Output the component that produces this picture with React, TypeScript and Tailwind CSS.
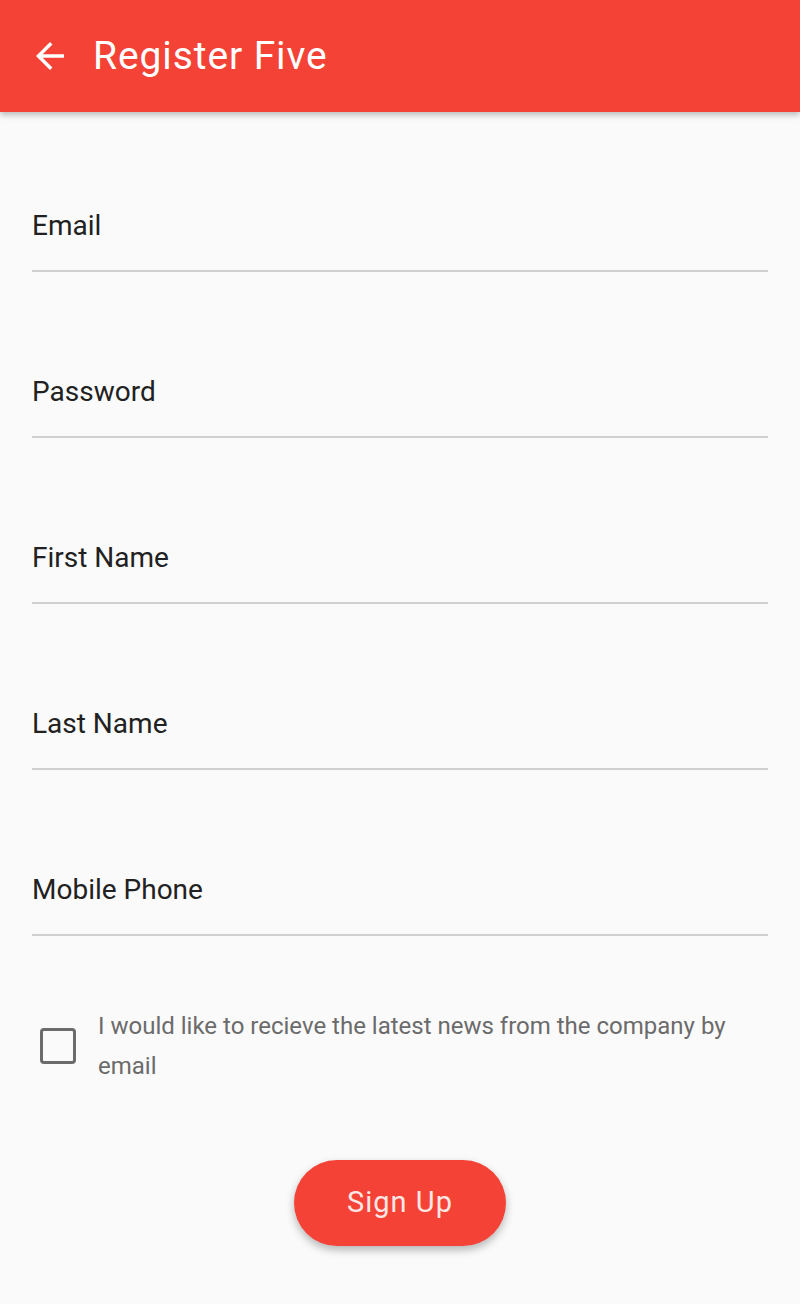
import { useState } from 'react'

const fields = ['Email', 'Password', 'First Name', 'Last Name', 'Mobile Phone']

export default function App() {
  const [checked, setChecked] = useState(false)

  return (
    <div className="min-h-[1304px] bg-[#fafafa] font-['Roboto','Liberation_Sans',sans-serif]">
      {/* app bar */}
      <div className="h-[112px] bg-[#f44336] flex items-center shadow-[0_3px_6px_rgba(0,0,0,0.25)] relative z-10">
        <div className="w-[42px] h-[42px] ml-[29px] text-white">
          <svg viewBox="0 0 24 24" width="42" height="42" fill="currentColor">
            <path d="M20 11H7.83l5.59-5.59L12 4l-8 8 8 8 1.41-1.41L7.83 13H20v-2z" />
          </svg>
        </div>
        <h1 className="ml-[22px] text-white text-[39px] font-normal tracking-[0.9px] leading-none">Register Five</h1>
      </div>

      {/* form */}
      <div className="px-8 pt-[94px] flex flex-col gap-[100px]">
        {fields.map((f) => (
          <div key={f} className="border-b-2 border-[#d0d0d0] pb-6">
            <div className="text-[28px] leading-[40px] text-[#212121]">{f}</div>
          </div>
        ))}
      </div>

      {/* newsletter */}
      <div className="mt-[70px] pl-[40px] pr-8 flex items-center">
        <button
          onClick={() => setChecked(!checked)}
          className="w-[36px] h-[36px] shrink-0 rounded-[4px] border-[3.5px] border-[#6b6b6b] bg-transparent"
        />
        <p className="ml-[22px] w-[670px] text-[24px] leading-[40px] text-[#6b6b6b]">
          I would like to recieve the latest news from the company by email
        </p>
      </div>

      <div className="mt-[74px] flex justify-center">
        <button className="w-[212px] h-[86px] rounded-full bg-[#f44336] text-[#fde7e5] text-[29px] tracking-[1px] shadow-[0_4px_8px_rgba(0,0,0,0.28)]">
          Sign Up
        </button>
      </div>
    </div>
  )
}
